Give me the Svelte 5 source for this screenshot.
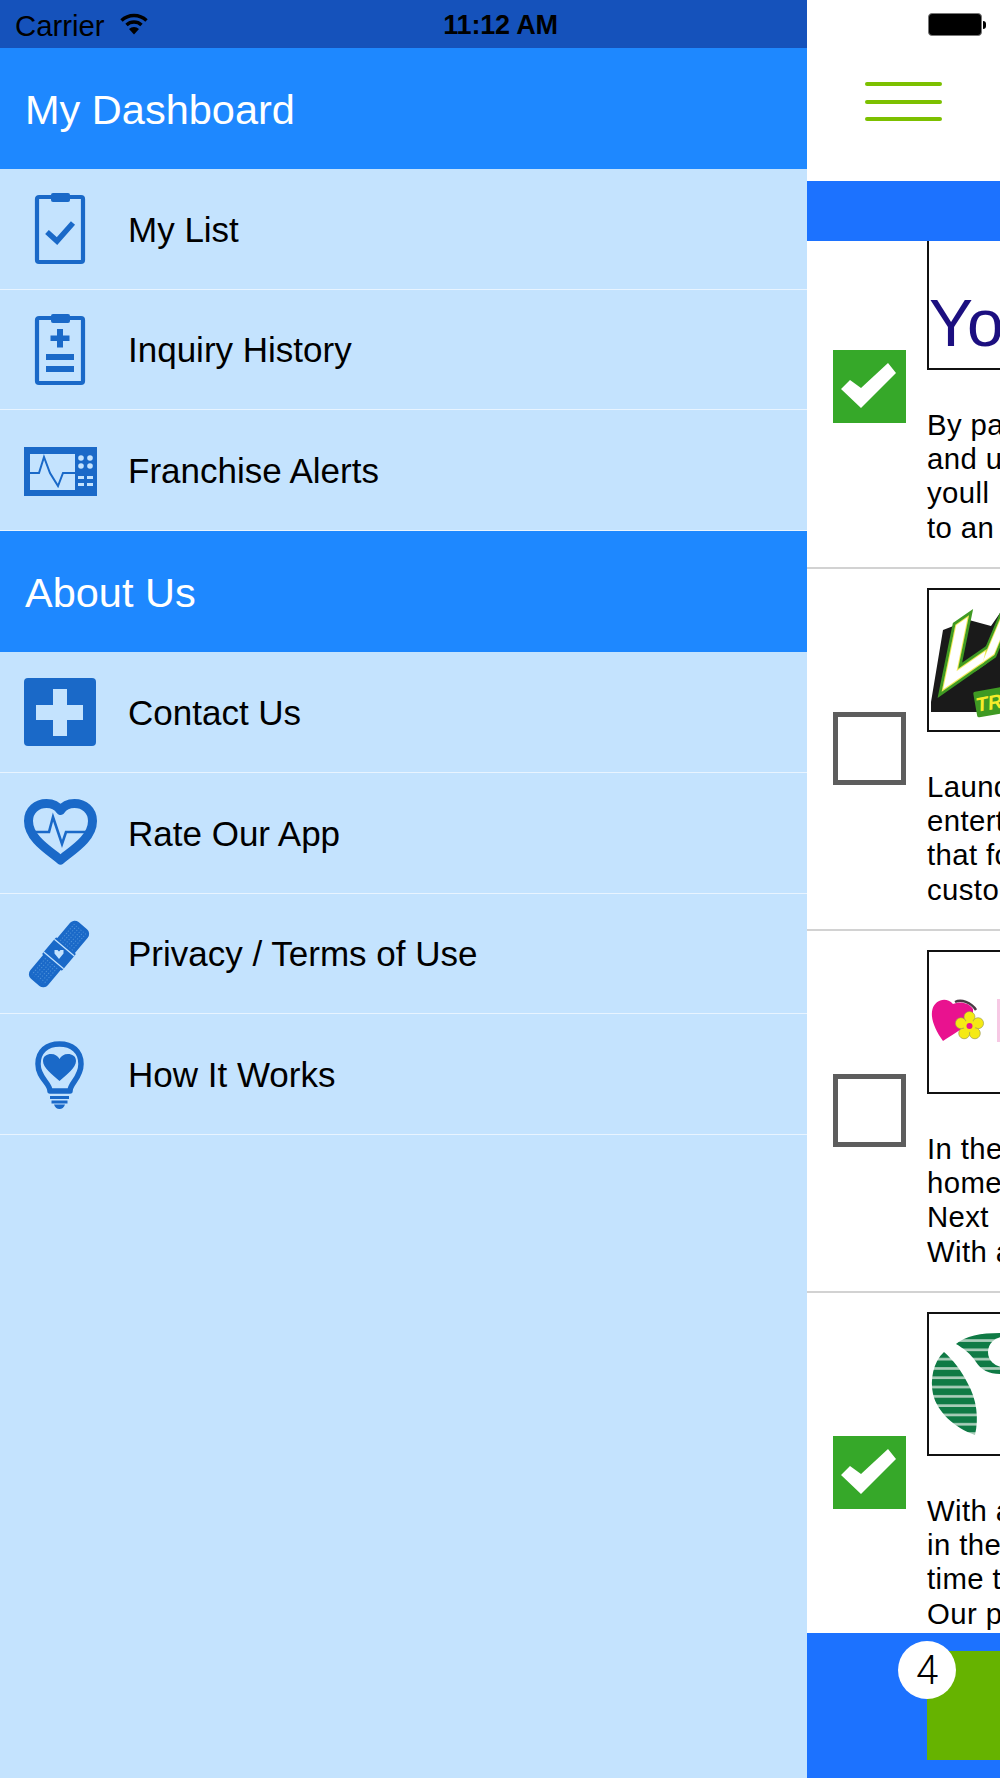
<script>
	// Drawer sections, each item names the icon it draws below.
	const sections = [
		{
			title: 'My Dashboard',
			items: [
				{ icon: 'list', label: 'My List' },
				{ icon: 'history', label: 'Inquiry History' },
				{ icon: 'monitor', label: 'Franchise Alerts' }
			]
		},
		{
			title: 'About Us',
			items: [
				{ icon: 'cross', label: 'Contact Us' },
				{ icon: 'heart', label: 'Rate Our App' },
				{ icon: 'bandage', label: 'Privacy / Terms of Use' },
				{ icon: 'bulb', label: 'How It Works' }
			]
		}
	];

	const franchises = [
		{ logo: 'yo', checked: true, lines: ['By partnering', 'and using', 'youll', 'to an'] },
		{ logo: 'la', checked: false, lines: ['Laundry', 'entertainment', 'that for', 'customer'] },
		{ logo: 'flower', checked: false, lines: ['In the', 'home', 'Next', 'With a'] },
		{ logo: 'leaf', checked: true, lines: ['With a', 'in the', 'time to', 'Our p'] }
	];

	const petals = [0, 72, 144, 216, 288];
</script>

{#snippet icon(name)}
	<svg class="icon" viewBox="0 0 73 73" aria-hidden="true">
		{#if name === 'list'}
			<rect class="line" x="13" y="4" width="46" height="65" rx="2" stroke-width="4.2" />
			<rect class="solid" x="27" y="0" width="19" height="9" rx="2" />
			<path class="line" d="M23 39 L33 48 L49 30" stroke-width="5.5" />
		{:else if name === 'history'}
			<rect class="line" x="13" y="4" width="46" height="65" rx="2" stroke-width="4.2" />
			<rect class="solid" x="27" y="0" width="19" height="9" rx="2" />
			<path class="solid" d="M33 15h6v6.5h6.5v5.5h-6.5v6.5h-6v-6.5h-6.5v-5.5h6.5z" />
			<rect class="solid" x="22" y="40" width="28" height="6" />
			<rect class="solid" x="22" y="52" width="28" height="6" />
		{:else if name === 'monitor'}
			<rect class="solid" x="0" y="12" width="73" height="49" />
			<rect class="pale" x="6" y="19" width="45" height="36" />
			<path class="line" d="M6 38 H15 L20 22 L26 38 L34 51 L39 38 H51" stroke-width="2" />
			<g class="pale">
				<circle cx="57" cy="23" r="2.8" />
				<circle cx="66" cy="23" r="2.8" />
				<circle cx="57" cy="31" r="2.8" />
				<circle cx="66" cy="31" r="2.8" />
				<rect x="54" y="41" width="6" height="3" />
				<rect x="63" y="41" width="6" height="3" />
				<rect x="54" y="48" width="6" height="3" />
				<rect x="63" y="48" width="6" height="3" />
			</g>
		{:else if name === 'cross'}
			<rect class="solid" x="0" y="2" width="72" height="68" rx="4" />
			<path class="pale" d="M29 13h14v16h16v15h-16v16h-14v-16h-17v-15h17z" />
		{:else if name === 'heart'}
			<path
				class="line"
				stroke-width="9"
				stroke-linejoin="round"
				d="M36.5 63 C26 54 4.5 42 4.5 24 C4.5 13 13 6.5 22.5 6.5 C29 6.5 33.5 9 36.5 13.5 C39.5 9 44 6.5 50.5 6.5 C60 6.5 68.5 13 68.5 24 C68.5 42 47 54 36.5 63 Z"
			/>
			<path class="line" stroke-width="2.6" d="M10 35 H25 L29 20 L38 47 L42 35 H63" />
		{:else if name === 'bandage'}
			<defs>
				<pattern id="bandage-dots" width="3" height="3" patternUnits="userSpaceOnUse">
					<circle cx="1.5" cy="1.5" r="0.6" fill="#5f9fe0" />
				</pattern>
			</defs>
			<g transform="rotate(-50 35 36)">
				<rect class="solid" x="-2" y="24.5" width="74" height="23" rx="6" />
				<rect x="2" y="27" width="66" height="18" fill="url(#bandage-dots)" />
				<rect class="solid" x="24" y="23" width="22" height="26" rx="1" />
				<rect class="pale" x="26" y="23" width="1.3" height="26" />
				<rect class="pale" x="42.7" y="23" width="1.3" height="26" />
				<path class="pale" transform="rotate(50 35 36)" d="M35 41 L30.5 35.5 V32 H33.5 L35 33.5 L36.5 32 H39.5 V35.5 Z" />
			</g>
		{:else if name === 'bulb'}
			<path
				class="line"
				stroke-width="5.5"
				stroke-linejoin="round"
				d="M26 52 C26 44 14 39 14 25 C14 12 23 5 35.5 5 C48 5 57 12 57 25 C57 39 46 44 46 52 Z"
			/>
			<path class="solid" d="M35.5 42 C28 35 19 29 19 22 C19 17 23 15 27 15 C31 15 34 17 35.5 20 C37 17 40 15 44 15 C48 15 52 17 52 22 C52 29 43 35 35.5 42 Z" />
			<rect class="solid" x="26" y="57" width="19" height="3" />
			<rect class="solid" x="27.5" y="61.5" width="16" height="3" />
			<path class="solid" d="M30 65.5 H41 C40 68.5 38 70 35.5 70 C33 70 31 68.5 30 65.5 Z" />
		{/if}
	</svg>
{/snippet}

{#snippet logo(name)}
	<svg class="logo-art" viewBox="0 0 200 139" aria-hidden="true">
		{#if name === 'yo'}
			<text class="yo" x="0" y="118">Yo</text>
		{:else if name === 'la'}
			<path d="M2 122 V112 L14 40 L40 30 L62 36 L80 10 L200 0 V122 Z" fill="#1a1a1a" />
			<g transform="matrix(.82 -.57 -.2 .98 9 103)">
				<text class="la la-green" x="0" y="0">LA</text>
				<text class="la la-glow" x="0" y="0">LA</text>
				<text class="la" x="0" y="0">LA</text>
			</g>
			<rect x="44" y="102" width="80" height="26" rx="2" transform="rotate(-10 44 102)" fill="#3f9a23" />
			<text class="tra" x="48" y="122" transform="rotate(-10 48 122)">TRA</text>
		{:else if name === 'flower'}
			<path d="M14 89 C6 78 1 66 3.5 57 C6 48 17 44 24 52 C30 49 40 50 44 57 L44 70 C30 78 22 84 14 89 Z" fill="#e9128f" />
			<path d="M26 50 C32 47 42 50 47 58" fill="none" stroke="#4a3a44" stroke-width="2.5" />
			<g fill="#f5ea14" stroke="#9a9850" stroke-width="0.6">
				{#each petals as angle}
					<circle cx="40.5" cy="65" r="5.5" transform="rotate({angle} 40.5 74)" />
				{/each}
				<circle cx="40.5" cy="74" r="6" stroke="none" />
			</g>
			<circle cx="40.5" cy="74" r="3" fill="#e9128f" />
			<rect x="68" y="47" width="4" height="43" fill="#f7c8e4" />
		{:else if name === 'leaf'}
			<defs>
				<pattern id="leaf-stripes" width="10" height="9.3" patternUnits="userSpaceOnUse">
					<rect width="10" height="7" fill="#0f7a45" />
					<rect y="7" width="10" height="2.3" fill="#a9cdb9" />
				</pattern>
			</defs>
			<path d="M15 38 C4 48 1 66 4 80 C8 98 26 114 46 121 C50 105 48 85 38 68 C32 56 24 46 15 38 Z" fill="url(#leaf-stripes)" />
			<path d="M27 30 C36 22 52 19 71 19 V60 C60 60 52 56 47 48 C42 40 34 34 27 30 Z" fill="url(#leaf-stripes)" />
			<circle cx="74" cy="38" r="15" fill="#fff" />
		{/if}
	</svg>
{/snippet}

<div class="screen">
	<header class="status">
		<div class="carrier">
			<span>Carrier</span>
			<svg class="wifi" viewBox="0 0 28 22" aria-hidden="true">
				<path d="M1.5 7.5 A18 18 0 0 1 26.5 7.5" />
				<path d="M6.5 12 A11 11 0 0 1 21.5 12" />
				<path class="wifi-tip" d="M14 21.5 L9 16 A7.5 7.5 0 0 1 19 16 Z" />
			</svg>
		</div>
		<span class="time">11:12 AM</span>
		<div class="battery-slot">
			<div class="battery"></div>
			<div class="battery-nub"></div>
		</div>
	</header>

	<div class="panes">
		<nav class="drawer">
			{#each sections as section}
				<h2 class="drawer-title">{section.title}</h2>
				{#each section.items as item}
					<a class="drawer-item" href="#item">
						{@render icon(item.icon)}
						<span>{item.label}</span>
					</a>
				{/each}
			{/each}
		</nav>

		<main class="main">
			<div class="topbar">
				<button class="menu" type="button" aria-label="Menu">
					<span></span>
					<span></span>
					<span></span>
				</button>
			</div>
			<div class="band"></div>
			<div class="list">
				<div class="list-scroll">
					{#each franchises as row}
						<article class="row">
							<div class="check" class:checked={row.checked}>
								{#if row.checked}
									<svg viewBox="0 0 73 73" aria-hidden="true">
										<polygon points="8,39 17,30 28,38 55,13 63,23 28,58" fill="#fff" />
									</svg>
								{/if}
							</div>
							<div class="body">
								<div class="logo">{@render logo(row.logo)}</div>
								<p>
									{#each row.lines as line}
										<span>{line}</span>
									{/each}
								</p>
							</div>
						</article>
					{/each}
				</div>
			</div>
			<footer class="tray">
				<div class="tile">
					<span class="count">4</span>
				</div>
			</footer>
		</main>
	</div>
</div>

<style>
	:global(body) {
		margin: 0;
		background: #fff;
	}
	.screen {
		width: 1000px;
		height: 1778px;
		overflow: hidden;
		display: flex;
		flex-direction: column;
		font-family: 'Liberation Sans', Arial, sans-serif;
		color: #000;
	}
	.status {
		flex: none;
		height: 48px;
		display: grid;
		grid-template-columns: 1fr auto 1fr;
		align-items: center;
		padding: 0 14px 0 15px;
		box-sizing: border-box;
		background: linear-gradient(to right, #1552bb 807px, #fff 807px);
		font-size: 29.3px;
	}
	.carrier {
		display: flex;
		align-items: center;
		gap: 15px;
		padding-top: 3px;
	}
	.wifi {
		width: 28px;
		height: 22px;
		margin-top: -4px;
	}
	.wifi path {
		fill: none;
		stroke: #000;
		stroke-width: 3.4;
	}
	.wifi .wifi-tip {
		fill: #000;
		stroke: none;
	}
	.time {
		padding-top: 3px;
		font-weight: 700;
		font-size: 27px;
		letter-spacing: -0.2px;
	}
	.battery-slot {
		display: flex;
		align-items: center;
		justify-content: flex-end;
		padding-top: 1px;
	}
	.battery {
		width: 54px;
		height: 23px;
		box-sizing: border-box;
		background: #000;
		border: 1.5px solid #777;
		border-radius: 4px;
	}
	.battery-nub {
		width: 3px;
		height: 8px;
		margin-left: 1.5px;
		background: #000;
		border-radius: 0 4px 4px 0;
	}
	.panes {
		flex: 1;
		min-height: 0;
		display: flex;
	}
	.drawer {
		flex: none;
		width: 807px;
		background: #c4e3fe;
	}
	.drawer-title {
		margin: 0;
		height: 120.8px;
		padding: 3px 0 0 25px;
		display: flex;
		align-items: center;
		box-sizing: border-box;
		background: #1e88ff;
		color: #fff;
		font-size: 41.5px;
		font-weight: 400;
	}
	.drawer-item {
		height: 120.8px;
		padding: 2px 0 0 24px;
		display: flex;
		align-items: center;
		gap: 31px;
		box-sizing: border-box;
		border-bottom: 1px solid #e8f4ff;
		color: #000;
		font-size: 35px;
		text-decoration: none;
	}
	.icon {
		flex: none;
		width: 73px;
		height: 73px;
		overflow: visible;
	}
	.icon .solid {
		fill: #1a69c8;
	}
	.icon .pale {
		fill: #c4e3fe;
	}
	.icon .line {
		fill: none;
		stroke: #1a69c8;
	}
	.main {
		flex: none;
		width: 1000px;
		display: flex;
		flex-direction: column;
		background: #fff;
	}
	.topbar {
		flex: none;
		height: 133px;
		padding: 34px 0 0 58px;
		box-sizing: border-box;
	}
	.menu {
		display: flex;
		flex-direction: column;
		gap: 13.5px;
		width: 77px;
		padding: 0;
		border: 0;
		background: none;
	}
	.menu span {
		display: block;
		height: 4px;
		border-radius: 2px;
		background: #7cc000;
	}
	.band {
		flex: none;
		height: 60px;
		background: #1c72ff;
	}
	.list {
		flex: 1;
		min-height: 0;
		overflow: hidden;
	}
	.list-scroll {
		margin-top: -34px;
	}
	.row {
		height: 362px;
		padding: 19px 0 0 26px;
		box-sizing: border-box;
		display: flex;
		gap: 21px;
		border-bottom: 2px solid #d2d2d2;
	}
	.check {
		flex: none;
		align-self: center;
		width: 73px;
		height: 73px;
		margin-top: -20px;
		box-sizing: border-box;
		border: 5px solid #5d5d5d;
	}
	.check.checked {
		border: 0;
		background: #36a829;
	}
	.check svg {
		display: block;
		width: 73px;
		height: 73px;
	}
	.body {
		flex: none;
		width: 400px;
	}
	.logo {
		width: 200px;
		height: 144px;
		box-sizing: border-box;
		border: 2.5px solid #111;
		overflow: hidden;
	}
	.logo-art {
		display: block;
		width: 200px;
		height: 139px;
	}
	.yo {
		font-family: 'Liberation Sans', sans-serif;
		font-size: 66px;
		fill: #1c0f80;
	}
	.la {
		font-family: 'Liberation Sans', sans-serif;
		font-weight: 700;
		font-size: 95px;
		letter-spacing: -6px;
		fill: #fff;
	}
	.la-green {
		stroke: #3f9a23;
		stroke-width: 11px;
	}
	.la-glow {
		stroke: #f2ea5a;
		stroke-width: 3px;
	}
	.tra {
		font-family: 'Liberation Sans', sans-serif;
		font-style: italic;
		font-weight: 700;
		font-size: 20px;
		fill: #f6ec2a;
	}
	p {
		margin: 38px 0 0;
		font-size: 29.33px;
		line-height: 34.2px;
		letter-spacing: 0.4px;
		white-space: nowrap;
	}
	p span {
		display: block;
	}
	.tray {
		flex: none;
		height: 145px;
		padding: 18px 0 0 120px;
		box-sizing: border-box;
		background: #1c72ff;
	}
	.tile {
		position: relative;
		width: 300px;
		height: 109px;
		background: #66b300;
	}
	.count {
		position: absolute;
		left: -29px;
		top: -10px;
		width: 58px;
		height: 58px;
		display: flex;
		align-items: center;
		justify-content: center;
		border-radius: 50%;
		background: #fff;
		font-family: Roboto, sans-serif;
		font-weight: 300;
		font-size: 40px;
	}
</style>
